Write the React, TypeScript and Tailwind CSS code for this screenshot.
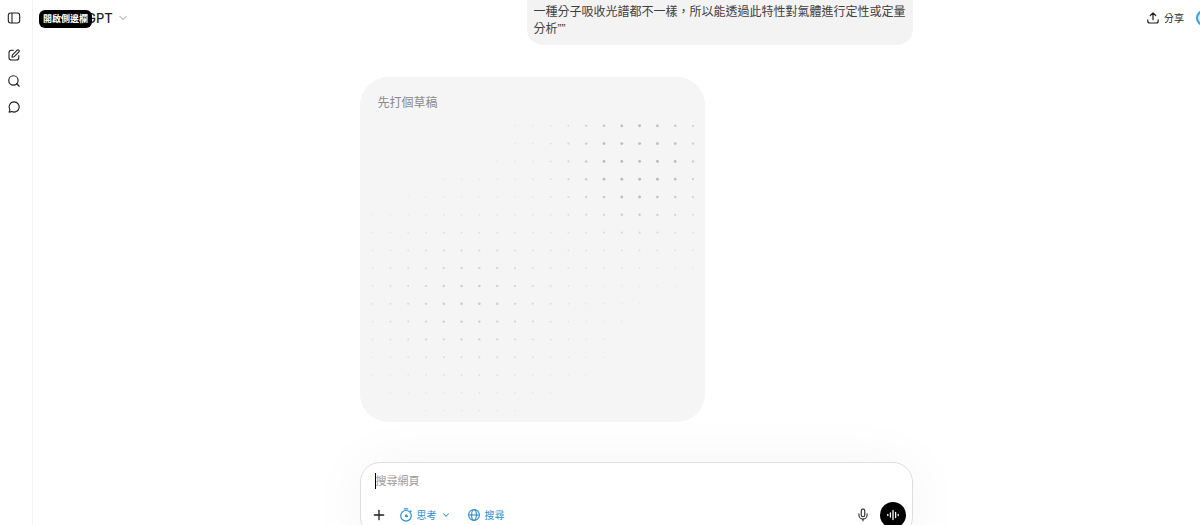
import { useState } from 'react';
import { ChevronDown, Mic, Plus, Search } from 'lucide-react';

const COLS = 19;
const ROWS = 17;

const BLOBS = [
  { col: 14.9, row: 1.9, spreadX: 2.6, spreadY: 2.6, strength: 1.3 },
  { col: 5.3, row: 10.1, spreadX: 3, spreadY: 2.5, strength: 0.66 },
  { col: 8, row: 8, spreadX: 5.5, spreadY: 4, strength: 0.08 },
];

const dots = Array.from({ length: COLS * ROWS }, (_, i) => {
  const col = i % COLS;
  const row = Math.floor(i / COLS);
  const level = BLOBS.reduce((sum, b) => {
    const dx = (col - b.col) / b.spreadX;
    const dy = (row - b.row) / b.spreadY;
    return sum + b.strength * Math.exp(-(dx * dx + dy * dy) / 2);
  }, 0);
  return { col, row, level: Math.min(1, level) };
}).filter((dot) => dot.level > 0.035);

function DotField() {
  return (
    <svg viewBox="0 0 345 345" className="absolute inset-0 h-full w-full" aria-hidden="true">
      {dots.map(({ col, row, level }) => (
        <circle
          key={`${col}-${row}`}
          cx={12.6 + col * 17.8}
          cy={48.8 + row * 17.8}
          r={0.75 + level * 0.7}
          fill="#b8b8b8"
          opacity={0.2 + level * 0.75}
        />
      ))}
    </svg>
  );
}

function PanelIcon() {
  return (
    <svg viewBox="0 0 14 14" className="size-3.5" fill="none" stroke="currentColor" strokeWidth="1.1">
      <rect x="1.3" y="2" width="11.4" height="10" rx="2.4" />
      <path d="M5 2v10" />
    </svg>
  );
}

function ComposeIcon() {
  return (
    <svg viewBox="0 0 14 14" className="size-3.5" fill="none" stroke="currentColor" strokeWidth="1.1" strokeLinecap="round" strokeLinejoin="round">
      <path d="M6.4 2.2H4.6A2.6 2.6 0 0 0 2 4.8v4.6A2.6 2.6 0 0 0 4.6 12h4.6a2.6 2.6 0 0 0 2.6-2.6V7.6" />
      <path d="M5 9.1l.3-1.9 4.900-5a1.150 1.150 0 0 1 1.700 1.600L7 8.8z" />
    </svg>
  );
}

function ChatIcon() {
  return (
    <svg viewBox="0 0 14 14" className="size-3.5" fill="none" stroke="currentColor" strokeWidth="1.1" strokeLinejoin="round">
      <path d="M7.2 1.9a5.1 5.1 0 1 1-2.3 9.7c-.9.3-1.800.5-2.800.5.5-.8.7-1.500.8-2.300A5.1 5.1 0 0 1 7.200 1.900z" />
    </svg>
  );
}

function ShareIcon() {
  return (
    <svg viewBox="0 0 14 14" className="size-3.5" fill="none" stroke="currentColor" strokeWidth="1.2" strokeLinecap="round" strokeLinejoin="round">
      <path d="M7 8.7V1.9M4.3 4.5 7 1.8l2.7 2.7M1.8 8.8v1.2a2 2 0 0 0 2 2h6.4a2 2 0 0 0 2-2V8.8" />
    </svg>
  );
}

function TimerIcon() {
  return (
    <svg viewBox="0 0 14 14" className="size-3.5" fill="none" stroke="currentColor" strokeWidth="1.2" strokeLinecap="round">
      <circle cx="7" cy="7.8" r="5.3" />
      <path d="M5.3.8h3.4M7 7.8l1.7.8M11.2 2.7l.9.9" />
      <circle cx="7.2" cy="7.9" r=".7" fill="currentColor" />
    </svg>
  );
}

function GlobeIcon() {
  return (
    <svg viewBox="0 0 14 14" className="size-3.5" fill="none" stroke="currentColor" strokeWidth="1.1">
      <circle cx="7" cy="7" r="5.4" />
      <ellipse cx="7" cy="7" rx="2.4" ry="5.4" />
      <path d="M1.6 7h10.8" />
    </svg>
  );
}

function VoiceIcon() {
  return (
    <svg viewBox="0 0 14 14" className="size-3.5" fill="none" stroke="currentColor" strokeWidth="1.3" strokeLinecap="round">
      <path d="M1.8 6.5v1M4.400 5v4M7 2.500v9M9.600 4.500v5M12.200 6.500v1" />
    </svg>
  );
}

function Sidebar() {
  return (
    <nav className="flex w-[33px] shrink-0 flex-col items-center border-r border-[#f3f3f3] pr-1 pt-[11px] text-[#1f1f1f]">
      <button type="button" aria-label="開啟側邊欄"><PanelIcon /></button>
      <div className="mt-[23px] flex flex-col gap-3">
        <button type="button" aria-label="新聊天"><ComposeIcon /></button>
        <button type="button" aria-label="搜尋聊天"><Search className="size-3.5" strokeWidth={2} /></button>
        <button type="button" aria-label="聊天"><ChatIcon /></button>
      </div>
    </nav>
  );
}

function Header() {
  return (
    <header className="absolute inset-x-0 top-0 flex h-9 items-center justify-between pl-6 text-[#1f1f1f]">
      <button type="button" className="flex items-center gap-1 font-['Inter','Noto_Sans_CJK_TC',sans-serif] text-[13px] font-medium leading-5">
        ChatGPT
        <ChevronDown className="size-3 text-[#8f8f8f]" strokeWidth={2} />
      </button>
      <span role="tooltip" className="absolute left-[6px] top-[10px] rounded-md bg-black px-1 py-px text-[9px] font-bold leading-4 text-white">
        開啟側邊欄
      </span>
      <div className="flex items-center gap-3">
        <button type="button" className="flex items-center gap-1 text-[10px]">
          <ShareIcon />
          分享
        </button>
        <div className="h-4 w-1 overflow-hidden">
          <div className="size-4 rounded-full border-2 border-[#3b9fe4] bg-[#d9ecfa]" />
        </div>
      </div>
    </header>
  );
}

function Composer() {
  const [query, setQuery] = useState('');

  return (
    <form
      onSubmit={(e) => e.preventDefault()}
      className="mt-10 rounded-[20px] border border-[#dedede] bg-white px-[14px] pb-2 pt-[10px] shadow-[0_4px_60px_rgba(0,0,0,0.05)]"
    >
      <div className="flex items-center">
        <span className="h-4 w-px bg-black" />
        <input
          type="text"
          aria-label="搜尋網頁"
          placeholder="搜尋網頁"
          value={query}
          onChange={(e) => setQuery(e.target.value)}
          className="w-full text-[11px] leading-4 outline-none placeholder:text-[#9b9b9b]"
        />
      </div>
      <div className="mt-[13px] flex items-center justify-between">
        <div className="flex items-center gap-3 text-[10px] text-[#2d8fd0]">
          <button type="button" aria-label="新增" className="-ml-1 text-[#1f1f1f]">
            <Plus className="size-4" strokeWidth={2} />
          </button>
          <button type="button" className="flex items-center gap-1">
            <TimerIcon />
            思考
            <ChevronDown className="size-2.5" strokeWidth={2.5} />
          </button>
          <button type="button" className="ml-1 flex items-center gap-1">
            <GlobeIcon />
            搜尋
          </button>
        </div>
        <div className="-mr-2 flex items-center gap-[10px]">
          <button type="button" aria-label="聽寫" className="text-[#333333]">
            <Mic className="size-3.5" strokeWidth={2} />
          </button>
          <button type="button" aria-label="語音模式" className="grid size-[26px] place-items-center rounded-full bg-black text-white">
            <VoiceIcon />
          </button>
        </div>
      </div>
    </form>
  );
}

export default function App() {
  return (
    <div className="flex h-screen overflow-hidden bg-white font-['Liberation_Sans','Noto_Sans_CJK_TC',sans-serif]">
      <Sidebar />
      <main className="relative min-w-0 flex-1 pl-[39px]">
        <div className="mx-auto flex max-w-[553px] flex-col">
          <div className="w-[386px] self-end rounded-b-2xl bg-[#f3f3f3] px-[7px] pb-[7px] pt-1 text-[12px] leading-[17px] text-[#404040]">
            一種分子吸收光譜都不一樣，所以能透過此特性對氣體進行定性或定量分析””
          </div>
          <section className="relative mt-8 aspect-square w-[345px] rounded-[28px] bg-[#f5f5f5] px-[18px] pt-4">
            <h2 className="text-[12px] leading-5 text-[#8a8a8a]">先打個草稿</h2>
            <DotField />
          </section>
          <Composer />
        </div>
        <Header />
      </main>
    </div>
  );
}
